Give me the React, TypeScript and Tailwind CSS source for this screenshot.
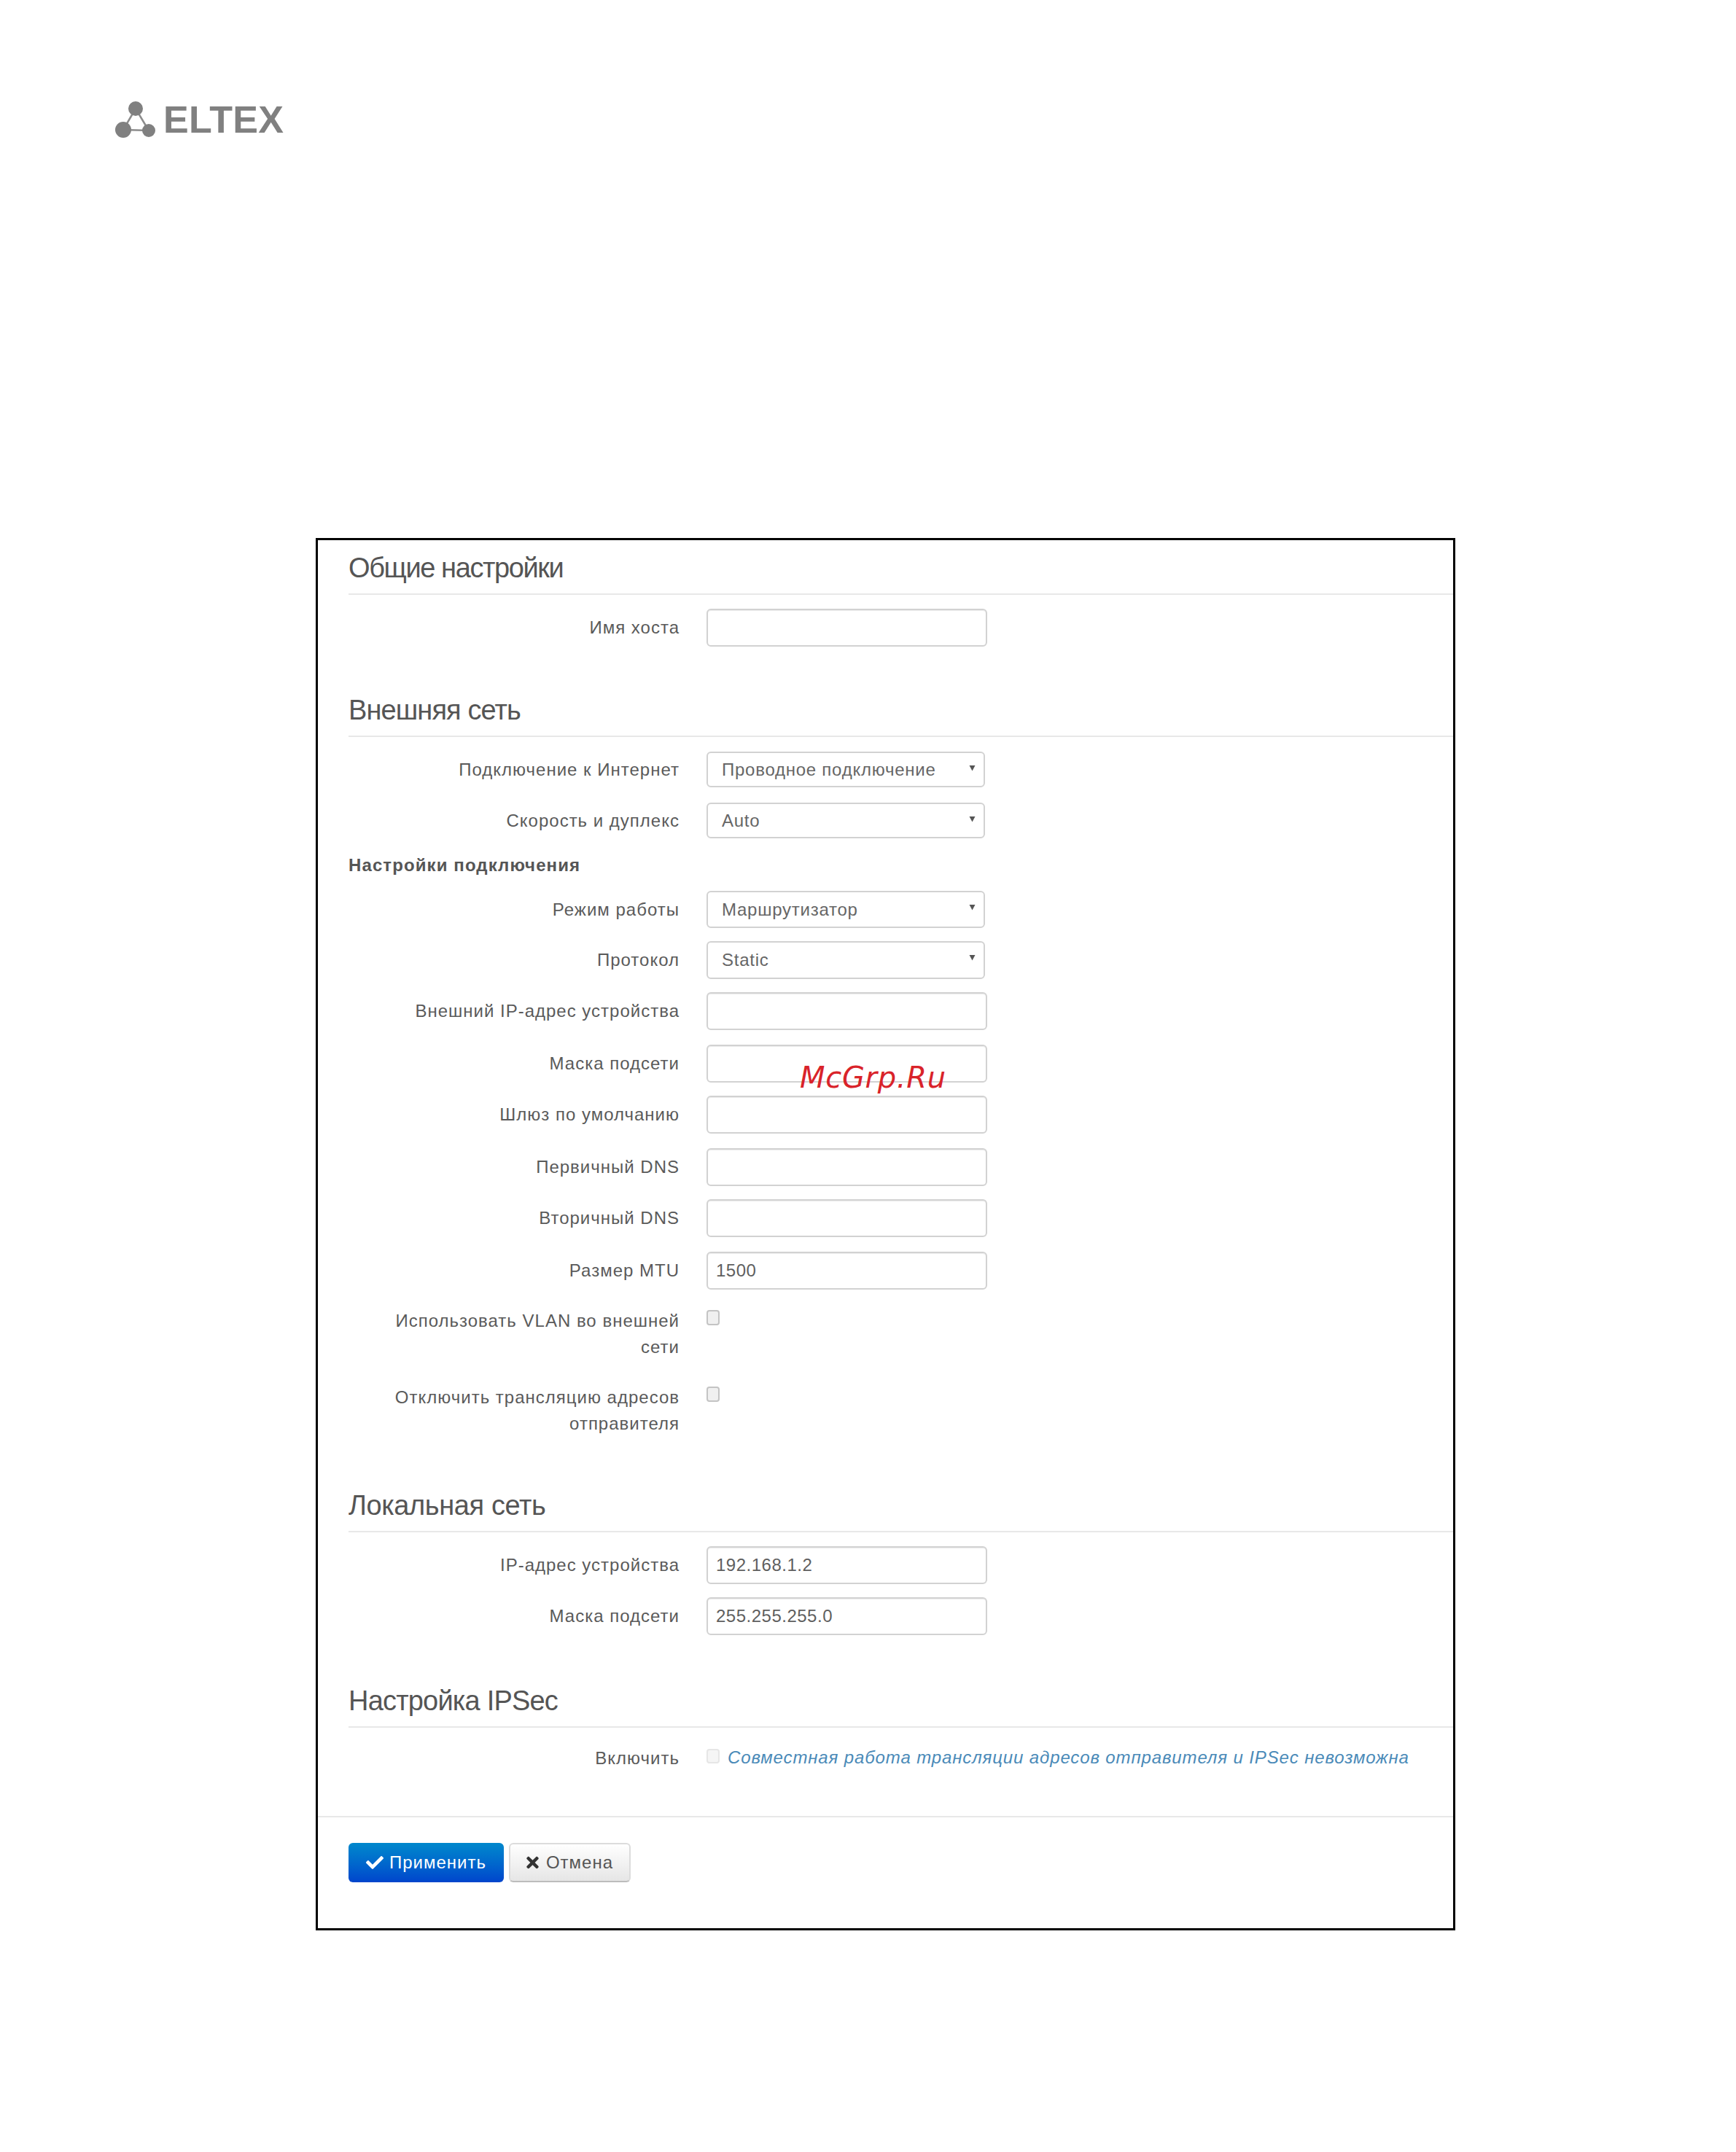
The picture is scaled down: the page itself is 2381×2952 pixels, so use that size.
import React from "react";
import { FaCheck, FaTimes } from "react-icons/fa";

function Heading({ text, mt, tracking = "tracking-[-0.7px]" }: { text: string; mt: string; tracking?: string }) {
  return (
    <h2 className={`${mt} ${tracking} ml-[42px] flex h-[72px] items-start border-b-2 border-[#e8e8e8] pt-[11px] text-[38px] font-normal leading-[48px] text-[#555555]`}>
      {text}
    </h2>
  );
}

function Label({ children }: { children: React.ReactNode }) {
  return <div className="w-[454px] text-right text-[24px] leading-[36px] tracking-[1px] text-[#5a5a5a]">{children}</div>;
}

function TextRow({ label, value = "", mt }: { label: string; value?: string; mt: string }) {
  return (
    <div className={`${mt} ml-[42px] flex items-center gap-[37px]`}>
      <Label>{label}</Label>
      <input
        readOnly
        value={value}
        className="h-[52px] w-[385px] rounded-[6px] border-2 border-[#d2d2d2] bg-white px-[11px] text-[24px] tracking-[0.5px] text-[#5f5f5f] shadow-[inset_0_1px_1px_rgba(0,0,0,0.08)] outline-none"
      />
    </div>
  );
}

function SelectRow({ label, value, mt, h }: { label: string; value: string; mt: string; h: string }) {
  return (
    <div className={`${mt} ml-[42px] flex items-center gap-[37px]`}>
      <Label>{label}</Label>
      <div className="relative">
        <select
          value={value}
          onChange={() => {}}
          className={`${h} block w-[382px] appearance-none rounded-[6px] border-2 border-[#d2d2d2] bg-white pl-[19px] text-[24px] tracking-[0.75px] text-[#666666] outline-none`}
        >
          <option>{value}</option>
        </select>
        <svg className="pointer-events-none absolute right-[13px] top-[18px]" width="9" height="9" viewBox="0 0 9 9">
          <path d="M0.5 1h8L4.5 8.5z" fill="#555555" />
        </svg>
      </div>
    </div>
  );
}

function CheckRow({ lines, mt }: { lines: string[]; mt: string }) {
  return (
    <div className={`${mt} ml-[42px] flex items-start gap-[37px]`}>
      <Label>
        {lines.map((l) => (
          <div key={l}>{l}</div>
        ))}
      </Label>
      <input
        type="checkbox"
        readOnly
        className="mt-[3px] h-[21px] w-[18px] appearance-none rounded-[4px] border-2 border-[#c4c4c4] bg-[#f0f0f0]"
      />
    </div>
  );
}

function Logo() {
  return (
    <div className="flex items-center gap-[10px]">
      <svg width="56" height="56" viewBox="0 0 56 56">
        <path d="M28 13 L11 42 L46 43 Z" fill="none" stroke="#8c8c8c" strokeWidth="2.5" />
        <circle cx="28" cy="13" r="10" fill="#808080" />
        <circle cx="11" cy="42" r="11" fill="#808080" />
        <circle cx="46" cy="43" r="9" fill="#808080" />
      </svg>
      <span className="text-[52px] font-bold leading-[56px] tracking-[0.3px] text-[#808080]">ELTEX</span>
    </div>
  );
}

export default function App() {
  return (
    <div className="relative h-[2952px] w-[2381px] bg-white font-['Liberation_Sans',Arial,sans-serif]">
      <div className="h-[738px] pl-[158px] pt-[136px]">
        <Logo />
      </div>
      <div className="ml-[433px] w-[1563px] border-[3px] border-black bg-white pb-[63px] pt-[3px]">
        <Heading text="Общие настройки" mt="mt-0" tracking="tracking-[-1.4px]" />
        <TextRow label="Имя хоста" mt="mt-[19px]" />

        <Heading text="Внешняя сеть" mt="mt-[52px]" tracking="tracking-[-0.9px]" />
        <SelectRow label="Подключение к Интернет" value="Проводное подключение" mt="mt-[20px]" h="h-[49px]" />
        <SelectRow label="Скорость и дуплекс" value="Auto" mt="mt-[21px]" h="h-[49px]" />
        <div className="ml-[42px] mt-[19px] h-[36px] text-[24px] font-bold leading-[36px] tracking-[1.1px] text-[#555555]">Настройки подключения</div>
        <SelectRow label="Режим работы" value="Маршрутизатор" mt="mt-[17px]" h="h-[51px]" />
        <SelectRow label="Протокол" value="Static" mt="mt-[18px]" h="h-[52px]" />
        <TextRow label="Внешний IP-адрес устройства" mt="mt-[18px]" />
        <TextRow label="Маска подсети" mt="mt-[20px]" />
        <TextRow label="Шлюз по умолчанию" mt="mt-[18px]" />
        <TextRow label="Первичный DNS" mt="mt-[20px]" />
        <TextRow label="Вторичный DNS" mt="mt-[18px]" />
        <TextRow label="Размер MTU" value="1500" mt="mt-[20px]" />
        <CheckRow lines={["Использовать VLAN во внешней", "сети"]} mt="mt-[25px]" />
        <CheckRow lines={["Отключить трансляцию адресов", "отправителя"]} mt="mt-[33px]" />

        <Heading text="Локальная сеть" mt="mt-[59px]" tracking="tracking-[-0.4px]" />
        <TextRow label="IP-адрес устройства" value="192.168.1.2" mt="mt-[19px]" />
        <TextRow label="Маска подсети" value="255.255.255.0" mt="mt-[18px]" />

        <Heading text="Настройка IPSec" mt="mt-[55px]" tracking="tracking-[-0.8px]" />
        <div className="ml-[42px] mt-[24px] flex items-start gap-[37px]">
          <Label>Включить</Label>
          <input
            type="checkbox"
            disabled
            className="mt-[5px] h-[20px] w-[18px] appearance-none rounded-[4px] border-2 border-[#e6e6e6] bg-[#f5f5f5]"
          />
          <span className="-ml-[26px] text-[24px] italic leading-[34px] tracking-[0.87px] text-[#4a8ab8]">
            Совместная работа трансляции адресов отправителя и IPSec невозможна
          </span>
        </div>

        <div className="mt-[61px] h-[2px] bg-[#e8e8e8]" />

        <div className="ml-[42px] mt-[35px] flex gap-[7px]">
          <button className="flex h-[54px] w-[213px] items-center justify-center gap-[8px] rounded-[6px] bg-gradient-to-b from-[#0088cc] to-[#0044cc] text-[24px] tracking-[1px] text-white">
            <FaCheck className="h-[24px] w-[24px]" />
            Применить
          </button>
          <button className="flex h-[54px] w-[167px] items-center justify-center gap-[10px] rounded-[6px] border-2 border-[#dcdcdc] border-b-[#bcbcbc] bg-gradient-to-b from-white to-[#e6e6e6] text-[24px] tracking-[1px] text-[#555555]">
            <FaTimes className="h-[24px] w-[17px] text-[#333333]" />
            Отмена
          </button>
        </div>
      </div>

      <div className="absolute left-[1097px] top-[1454px] font-['DejaVu_Sans',sans-serif] text-[40px] italic leading-[48px] tracking-[0.7px] text-[#d9232a]">
        McGrp.Ru
      </div>
    </div>
  );
}
